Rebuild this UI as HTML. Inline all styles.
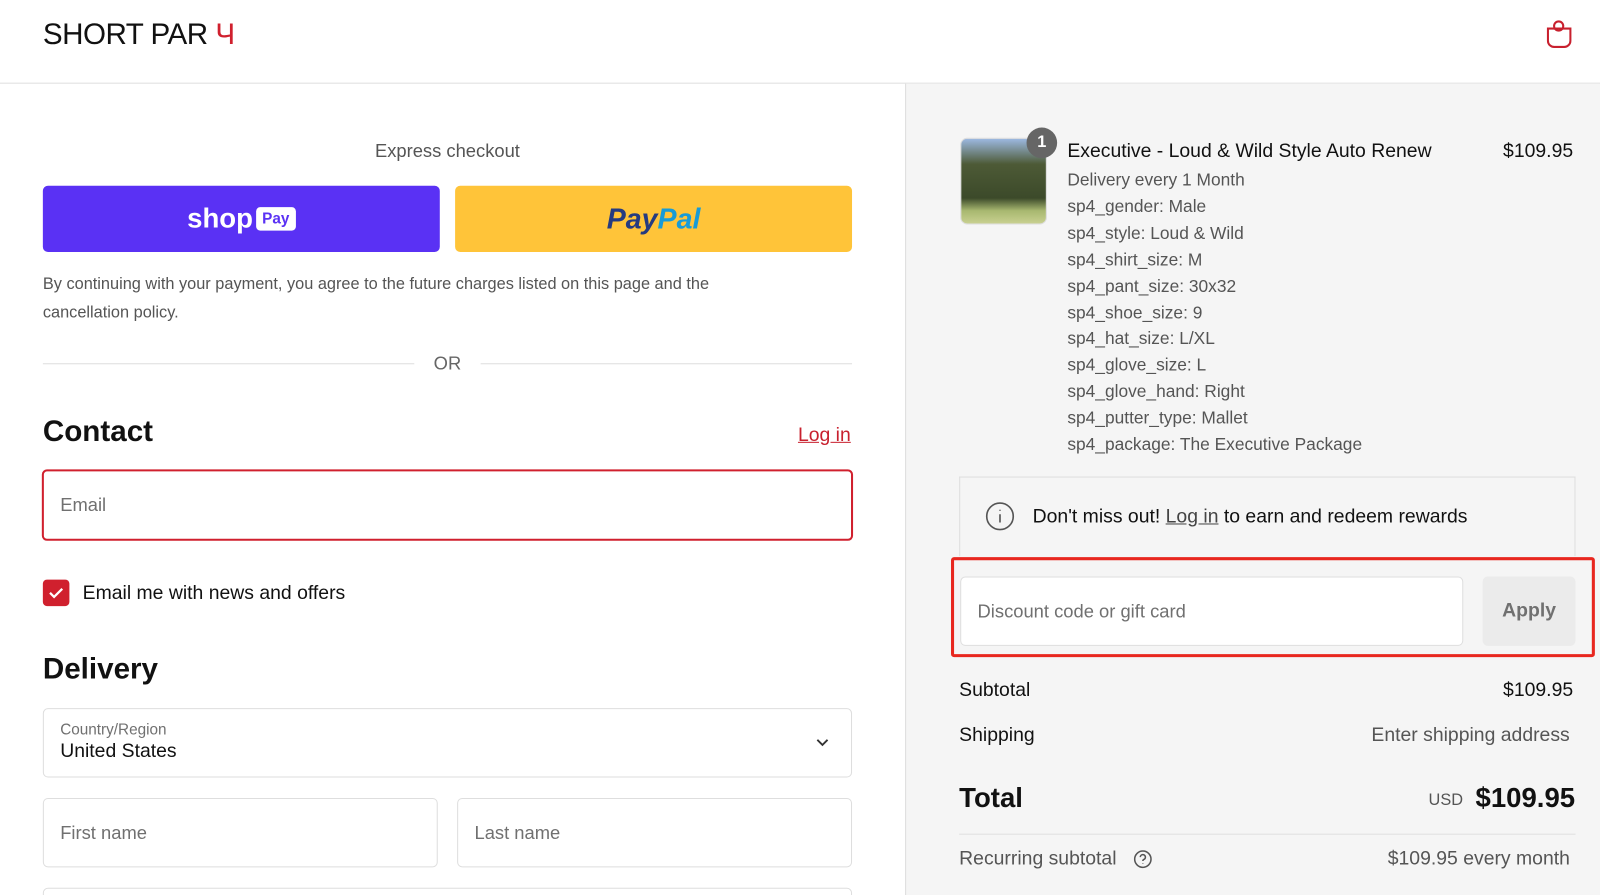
<!DOCTYPE html>
<html><head><meta charset="utf-8"><style>
*{box-sizing:border-box;margin:0;padding:0}
html,body{width:1600px;height:895px;overflow:hidden}
body{font-family:"Liberation Sans",Helvetica,Arial,sans-serif;color:#111;background:#fff;position:relative}
#w{position:absolute;left:0;top:0;width:1568px;height:880px;transform:scale(1.0204);transform-origin:0 0}
.hdr{position:absolute;left:0;top:0;width:1568px;height:82px;border-bottom:1px solid #dedede;background:#fff}
.logo{position:absolute;left:42px;top:18px;font-size:29px;letter-spacing:-0.5px;color:#111}
.logo span{color:#d0202e}
.right{position:absolute;left:887px;top:82px;width:713px;height:813px;background:#f5f5f5;border-left:1px solid #dedede}
.a{position:absolute}
.inp{position:absolute;border:1px solid #dedede;border-radius:5px;background:#fff;font-size:18px;color:#707070;padding-left:16px;display:flex;align-items:center}
.g{color:#555}
</style></head><body><div id="w">
<div class="hdr">
<div class="logo">SHORT PAR <span>Ч</span></div>
<svg class="a" style="left:1513px;top:19px" width="30" height="30" viewBox="0 0 30 30" fill="none" stroke="#c8202e" stroke-width="2"><rect x="10" y="2" width="9" height="9" rx="4.5"/><path d="M4 9h22v12a6 6 0 0 1-6 6H10a6 6 0 0 1-6-6z"/></svg>
</div>
<div class="a" style="left:0;top:138px;width:877px;text-align:center;font-size:18px;color:#555">Express checkout</div>
<div class="a" style="left:42px;top:182px;width:389px;height:65px;background:#5a31f4;border-radius:5px;color:#fff;display:flex;align-items:center;justify-content:center;font-size:27px;font-weight:bold">shop<span style="background:#fff;color:#5a31f4;font-size:15px;padding:3px 6px;border-radius:4px;margin-left:3px">Pay</span></div>
<div class="a" style="left:446px;top:182px;width:389px;height:65px;background:#ffc439;border-radius:5px;display:flex;align-items:center;justify-content:center;font-size:28px;font-weight:bold;font-style:italic"><span style="color:#253b80">Pay</span><span style="color:#179bd7">Pal</span></div>
<div class="a" style="left:42px;top:265px;width:740px;font-size:16px;line-height:28px;color:#555">By continuing with your payment, you agree to the future charges listed on this page and the cancellation policy.</div>
<div class="a" style="left:42px;top:356px;width:364px;border-top:1px solid #dedede"></div>
<div class="a" style="left:471px;top:356px;width:364px;border-top:1px solid #dedede"></div>
<div class="a" style="left:425px;top:346px;font-size:18px;color:#666">OR</div>
<div class="a" style="left:42px;top:407px;font-size:29px;font-weight:bold">Contact</div>
<div class="a" style="left:782px;top:416px;font-size:19px;color:#c8202e;text-decoration:underline">Log in</div>
<div class="inp" style="left:41px;top:460px;width:795px;height:70px;border:2px solid #d0202e">Email</div>
<div class="a" style="left:42px;top:568px;width:26px;height:26px;background:#d0202e;border-radius:4px"><svg width="26" height="26" viewBox="0 0 26 26" fill="none" stroke="#fff" stroke-width="2.2"><path d="M7 13l4 4 8-8"/></svg></div>
<div class="a" style="left:81px;top:571px;font-size:19px">Email me with news and offers</div>
<div class="a" style="left:42px;top:640px;font-size:29px;font-weight:bold">Delivery</div>
<div class="inp" style="left:42px;top:694px;width:793px;height:68px;display:block;padding-top:12px"><div style="font-size:15px;color:#707070">Country/Region</div><div style="font-size:19px;color:#111;margin-top:2px">United States</div></div>
<svg class="a" style="left:798px;top:721px" width="16" height="14" viewBox="0 0 16 14" fill="none" stroke="#333" stroke-width="1.8"><path d="M3 4l5 5 5-5"/></svg>
<div class="inp" style="left:42px;top:782px;width:387px;height:68px">First name</div>
<div class="inp" style="left:448px;top:782px;width:387px;height:68px">Last name</div>
<div class="inp" style="left:42px;top:870px;width:793px;height:40px"></div>
<div class="right"></div>
<div class="a" style="left:941px;top:135px;width:85px;height:85px;border-radius:7px;border:1px solid #ddd;background:linear-gradient(180deg,#9cb8e0 0%,#4d5a36 30%,#3c4a2a 70%,#a8b870 85%,#c8d090 100%)"></div>
<div class="a" style="left:1006px;top:125px;width:30px;height:30px;border-radius:50%;background:#666;color:#fff;font-size:16px;display:flex;align-items:center;justify-content:center;font-weight:bold">1</div>
<div class="a" style="left:1046px;top:138px;font-size:19px">Executive - Loud &amp; Wild Style Auto Renew</div>
<div class="a" style="left:1473px;top:138px;font-size:19px">$109.95</div>
<div class="a g" style="left:1046px;top:164px;font-size:17px;line-height:25.9px">Delivery every 1 Month<br>sp4_gender: Male<br>sp4_style: Loud &amp; Wild<br>sp4_shirt_size: M<br>sp4_pant_size: 30x32<br>sp4_shoe_size: 9<br>sp4_hat_size: L/XL<br>sp4_glove_size: L<br>sp4_glove_hand: Right<br>sp4_putter_type: Mallet<br>sp4_package: The Executive Package</div>
<div class="a" style="left:940px;top:467px;width:604px;height:78px;border:1px solid #dedede;border-bottom:none;background:#f5f5f5"></div>
<svg class="a" style="left:965px;top:491px" width="30" height="30" viewBox="0 0 30 30" fill="none" stroke="#555" stroke-width="1.6"><circle cx="15" cy="15" r="13"/><path d="M15 13v8M15 8.5v1"/></svg>
<div class="a" style="left:1012px;top:496px;font-size:19px">Don't miss out! <span style="text-decoration:underline;color:#444">Log in</span> to earn and redeem rewards</div>
<div class="a" style="left:932px;top:546px;width:631px;height:98px;border:3px solid #e8271f;border-radius:3px"></div>
<div class="inp" style="left:941px;top:565px;width:493px;height:68px">Discount code or gift card</div>
<div class="a" style="left:1453px;top:565px;width:91px;height:68px;background:#ebebeb;border-radius:5px;font-size:19px;font-weight:bold;color:#707070;display:flex;align-items:center;justify-content:center">Apply</div>
<div class="a" style="left:940px;top:666px;font-size:19px">Subtotal</div>
<div class="a" style="left:1473px;top:666px;font-size:19px">$109.95</div>
<div class="a" style="left:940px;top:710px;font-size:19px">Shipping</div>
<div class="a g" style="left:1344px;top:710px;font-size:19px">Enter shipping address</div>
<div class="a" style="left:940px;top:767px;font-size:27px;font-weight:bold">Total</div>
<div class="a" style="left:1400px;top:776px;font-size:16px;color:#555">USD</div>
<div class="a" style="left:1446px;top:767px;font-size:27px;font-weight:bold">$109.95</div>
<div class="a" style="left:940px;top:817px;width:604px;border-top:1px solid #dedede"></div>
<div class="a g" style="left:940px;top:831px;font-size:19px">Recurring subtotal</div>
<svg class="a" style="left:1110px;top:832px" width="20" height="20" viewBox="0 0 20 20" fill="none" stroke="#555" stroke-width="1.5"><circle cx="10" cy="10" r="8"/><path d="M7.5 8a2.5 2.5 0 1 1 3.5 2.3c-.7.3-1 .8-1 1.5M10 14v.5"/></svg>
<div class="a g" style="left:1360px;top:831px;font-size:19px">$109.95 every month</div>
</div></body></html>
